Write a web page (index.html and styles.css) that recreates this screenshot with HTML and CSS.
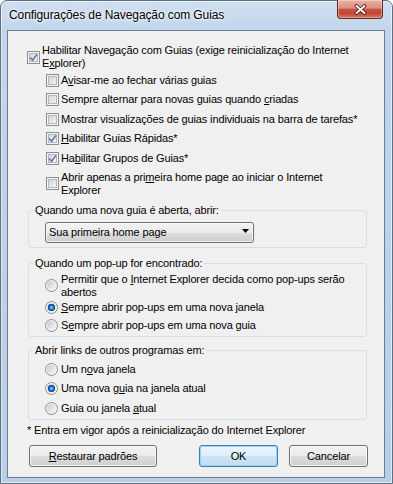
FILE: index.html
```html
<!DOCTYPE html>
<html lang="pt-BR">
<head>
<meta charset="utf-8">
<title>Configurações de Navegação com Guias</title>
<link rel="stylesheet" href="styles.css">
</head>
<body>
<div class="window">
  <div class="titlebar">
    <span class="title">Configurações de Navegação com Guias</span>
    <button class="close" aria-label="Fechar">
      <svg width="13" height="11" viewBox="0 0 13 11"><path d="M2.5 2 L10.5 9 M10.5 2 L2.5 9" stroke="#3b1b16" stroke-width="3.6" stroke-linecap="round" fill="none"/><path d="M2.5 2 L10.5 9 M10.5 2 L2.5 9" stroke="#fff" stroke-width="1.9" stroke-linecap="round" fill="none"/></svg>
    </button>
  </div>
  <div class="client">
    <div class="opt opt-main">
      <span class="cb checked"><svg width="11" height="11" viewBox="0 0 11 11"><path d="M2.2 5.4 L4.6 8.2 L9 2.4" stroke="#5c72ad" stroke-width="1.5" fill="none"/></svg></span>
      <span class="lbl">Habilitar Navegação com Guias (exige reinicialização do Internet<br>E<u>x</u>plorer)</span>
    </div>
    <div class="sublist">
      <div class="opt"><span class="cb"></span><span class="lbl">A<u>v</u>isar-me ao fechar várias guias</span></div>
      <div class="opt"><span class="cb"></span><span class="lbl">Sempre alternar para novas guias quando <u>c</u>riadas</span></div>
      <div class="opt"><span class="cb"></span><span class="lbl">Mostrar visualizações de guias individuais na barra de tarefas*</span></div>
      <div class="opt"><span class="cb checked"><svg width="11" height="11" viewBox="0 0 11 11"><path d="M2.2 5.4 L4.6 8.2 L9 2.4" stroke="#5c72ad" stroke-width="1.5" fill="none"/></svg></span><span class="lbl"><u>H</u>abilitar Guias Rápidas*</span></div>
      <div class="opt"><span class="cb checked"><svg width="11" height="11" viewBox="0 0 11 11"><path d="M2.2 5.4 L4.6 8.2 L9 2.4" stroke="#5c72ad" stroke-width="1.5" fill="none"/></svg></span><span class="lbl">Ha<u>b</u>ilitar Grupos de Guias*</span></div>
      <div class="opt"><span class="cb"></span><span class="lbl">Abrir apenas a pri<u>m</u>eira home page ao iniciar o Internet<br>Explorer</span></div>
    </div>

    <fieldset class="group g1">
      <legend>Quando uma nova guia é aberta, abrir:</legend>
      <div class="combo">
        <span>Sua primeira home page</span>
        <svg width="7" height="4" viewBox="0 0 7 4"><path d="M0 0 H7 L3.5 4 Z" fill="#000"/></svg>
      </div>
    </fieldset>

    <fieldset class="group g2">
      <legend>Quando um pop-up for encontrado:</legend>
      <div class="opt radio-row"><span class="rb"></span><span class="lbl">Permitir que o <u>I</u>nternet Explorer decida como pop-ups serão<br>abertos</span></div>
      <div class="opt radio-row"><span class="rb on"></span><span class="lbl"><u>S</u>empre abrir pop-ups em uma nova janela</span></div>
      <div class="opt radio-row"><span class="rb"></span><span class="lbl">S<u>e</u>mpre abrir pop-ups em uma nova guia</span></div>
    </fieldset>

    <fieldset class="group g3">
      <legend>Abrir links de outros programas em:</legend>
      <div class="opt radio-row"><span class="rb"></span><span class="lbl">Um n<u>o</u>va janela</span></div>
      <div class="opt radio-row"><span class="rb on"></span><span class="lbl">Uma nova g<u>u</u>ia na janela atual</span></div>
      <div class="opt radio-row"><span class="rb"></span><span class="lbl">Guia ou janela <u>a</u>tual</span></div>
    </fieldset>

    <div class="note">* Entra em vigor após a reinicialização do Internet Explorer</div>

    <div class="buttons">
      <button class="btn btn-restore"><u>R</u>estaurar padrões</button>
      <button class="btn btn-ok">OK</button>
      <button class="btn btn-cancel">Cancelar</button>
    </div>
  </div>
</div>
</body>
</html>
```

FILE: styles.css
```css
* { box-sizing: border-box; }

html, body {
  margin: 0;
  padding: 0;
}

body {
  width: 393px;
  height: 484px;
  overflow: hidden;
  background: #ffffff;
  font-family: "Liberation Sans", Arial, sans-serif;
  font-size: 11px;
  color: #000;
}

.window {
  width: 393px;
  height: 484px;
  border: 1px solid #5f6f80;
  border-radius: 7px 7px 0 0;
  background: linear-gradient(180deg, #cfdff1 0px, #c0d5eb 30px, #b9cfe7 100%);
  box-shadow: inset 0 0 0 1px rgba(255, 255, 255, 0.55);
  display: flex;
  flex-direction: column;
}

.titlebar {
  height: 29px;
  flex: none;
  display: flex;
  align-items: flex-start;
  padding-left: 8px;
}

.title {
  margin-top: 7px;
  font-size: 12px;
  line-height: 15px;
  letter-spacing: -0.1px;
  white-space: nowrap;
  text-shadow: 0 0 5px #ffffff, 0 0 3px #ffffff;
}

.close {
  margin-left: auto;
  margin-right: 9px;
  margin-top: -1px;
  width: 46px;
  height: 19px;
  padding: 0;
  border: 1px solid #5e2a22;
  border-top: none;
  border-radius: 0 0 4px 4px;
  background: linear-gradient(180deg, #eab1a3 0%, #de8f7c 45%, #c8503d 52%, #c4473a 75%, #d6775f 100%);
  box-shadow: inset 0 0 0 1px rgba(255, 255, 255, 0.35);
  display: flex;
  align-items: center;
  justify-content: center;
}

.client {
  flex: none;
  margin: 0 7px 0 6px;
  height: 448px;
  border: 1px solid #6d7e90;
  background: #f0f0f0;
  display: flex;
  flex-direction: column;
  align-items: flex-start;
  padding-top: 13px;
  letter-spacing: -0.14px;
}

.opt {
  display: flex;
  align-items: center;
  gap: 2px;
  line-height: 13px;
  white-space: nowrap;
}

.opt-main {
  margin-left: 19px;
}

.sublist {
  margin: 4px 0 0 38px;
  display: flex;
  flex-direction: column;
  gap: 6.4px;
}

.cb {
  flex: none;
  width: 13px;
  height: 13px;
  border: 1px solid #8e8f8f;
  background: linear-gradient(135deg, #c9cdd3 0%, #eceef0 70%, #f7f7f7 100%);
  box-shadow: inset 0 0 0 1px #f4f4f4, inset 0 0 0 2px #b4b8bd;
  display: flex;
  align-items: center;
  justify-content: center;
}

.cb svg {
  display: block;
}

.rb {
  flex: none;
  width: 13px;
  height: 13px;
  border-radius: 50%;
  border: 1px solid #8e8f8f;
  background: #f4f4f4;
  padding: 1px;
}

.rb::before {
  content: "";
  display: block;
  width: 9px;
  height: 9px;
  border-radius: 50%;
  background: linear-gradient(135deg, #c3c7cd 0%, #e9eaec 65%, #f8f8f8 100%);
}

.rb.on::before {
  background:
    radial-gradient(circle at 50% 50%, #8fd3ff 0, #3d9be3 1.4px, #1660b4 2.6px, #0f3f85 3.5px, rgba(15, 63, 133, 0) 3.8px),
    linear-gradient(135deg, #c3c7cd 0%, #e9eaec 65%, #f8f8f8 100%);
}

.radio-row {
  margin-left: 12px;
  gap: 3px;
}

.group {
  margin: 0 0 0 20px;
  width: 339px;
  min-width: 0;
  border: 1px solid #d5dfe5;
  border-radius: 3px;
  padding: 0 6px 4px 4px;
  display: flex;
  flex-direction: column;
  align-items: flex-start;
}

.group legend {
  padding: 0 2px;
  line-height: 13px;
  white-space: nowrap;
}

.g1 { margin-top: 7px; }
.g2 { margin-top: 9px; }
.g3 { margin-top: 7px; }

.combo {
  margin: 5px 0 0 12px;
  width: 209px;
  height: 21px;
  border: 1px solid #707070;
  border-radius: 3px;
  background: linear-gradient(180deg, #f2f2f2 0%, #ebebeb 50%, #dddddd 51%, #cfcfcf 100%);
  box-shadow: inset 0 0 0 1px rgba(255, 255, 255, 0.7);
  display: flex;
  align-items: center;
  justify-content: space-between;
  padding: 0 4px 0 3px;
  line-height: 13px;
}

.combo svg {
  display: block;
  margin-top: -2px;
}

.g2 .radio-row:nth-of-type(1) { margin-top: 3px; }
.g2 .radio-row:nth-of-type(2) { margin-top: 2px; }
.g2 .radio-row:nth-of-type(3) { margin-top: 5px; }

.g3 .radio-row:nth-of-type(1) { margin-top: 6px; }
.g3 .radio-row:nth-of-type(2) { margin-top: 6.5px; }
.g3 .radio-row:nth-of-type(3) { margin-top: 6.5px; }

.note {
  margin: 4px 0 0 19px;
  line-height: 13px;
  white-space: nowrap;
}

.buttons {
  margin-top: 8px;
  width: 100%;
  display: flex;
  padding: 0 16px 0 21px;
}

.btn {
  height: 22px;
  padding: 0;
  font: inherit;
  letter-spacing: inherit;
  color: #000;
  line-height: 20px;
  border: 1px solid #707070;
  border-radius: 3px;
  background: linear-gradient(180deg, #f2f2f2 0%, #ebebeb 50%, #dddddd 51%, #cfcfcf 100%);
  box-shadow: inset 0 0 0 1px rgba(255, 255, 255, 0.75);
}

.btn-restore { width: 128px; }

.btn-ok {
  width: 79px;
  margin-left: auto;
  border-color: #3c7fb1;
  background: linear-gradient(180deg, #eaf4fb 0%, #dfeef9 50%, #cde4f5 51%, #c0ddf2 100%);
  box-shadow: inset 0 0 0 1px #9fd3f3;
}

.btn-cancel {
  width: 79px;
  margin-left: 11px;
}
```
